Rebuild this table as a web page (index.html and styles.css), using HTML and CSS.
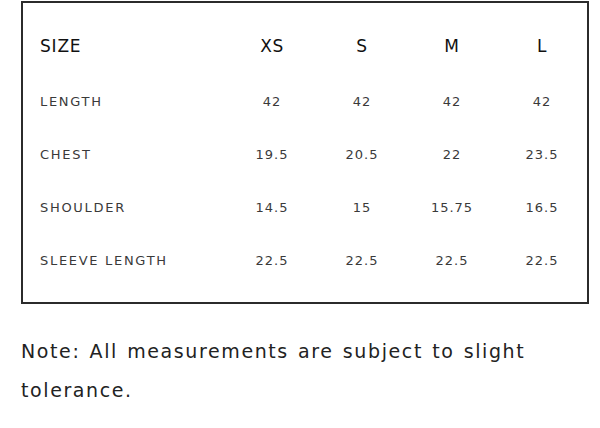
FILE: index.html
```html
<!DOCTYPE html>
<html>
<head>
<meta charset="utf-8">
<link rel="stylesheet" href="styles.css">
</head>
<body>
<div class="chart">
  <div class="row head">
    <div class="label">SIZE</div><div class="val">XS</div><div class="val">S</div><div class="val">M</div><div class="val">L</div>
  </div>
  <div class="row">
    <div class="label">LENGTH</div><div class="val">42</div><div class="val">42</div><div class="val">42</div><div class="val">42</div>
  </div>
  <div class="row">
    <div class="label">CHEST</div><div class="val">19.5</div><div class="val">20.5</div><div class="val">22</div><div class="val">23.5</div>
  </div>
  <div class="row">
    <div class="label">SHOULDER</div><div class="val">14.5</div><div class="val">15</div><div class="val">15.75</div><div class="val">16.5</div>
  </div>
  <div class="row">
    <div class="label">SLEEVE LENGTH</div><div class="val">22.5</div><div class="val">22.5</div><div class="val">22.5</div><div class="val">22.5</div>
  </div>
</div>
<p class="note">Note: All measurements are subject to slight tolerance.</p>
</body>
</html>
```
FILE: styles.css
```css
html, body { margin: 0; padding: 0; background: #fff; }
body {
  padding: 1px 11px 0 21px;
  font-family: "DejaVu Sans", "Liberation Sans", sans-serif;
  color: #2a2a2a;
}
.chart {
  border: 2px solid #2b2b2b;
  padding: 16.5px 0 15.5px 17px;
}
.row {
  display: grid;
  grid-template-columns: 1fr repeat(4, 90px);
  height: 53px;
  align-items: center;
  font-size: 13px;
  letter-spacing: 1px;
  color: #3a3a3a;
}
.row .label { letter-spacing: 1.7px; }
.row.head {
  margin-bottom: 2px;
  font-size: 17px;
  letter-spacing: 0.6px;
  color: #111;
}
.row.head .label { letter-spacing: 0.8px; }
.val { text-align: center; }
.note {
  margin: 28px 0 0 0;
  font-size: 19px;
  line-height: 39px;
  letter-spacing: 1.6px;
  word-spacing: 1.6px;
  color: #222;
}
```
